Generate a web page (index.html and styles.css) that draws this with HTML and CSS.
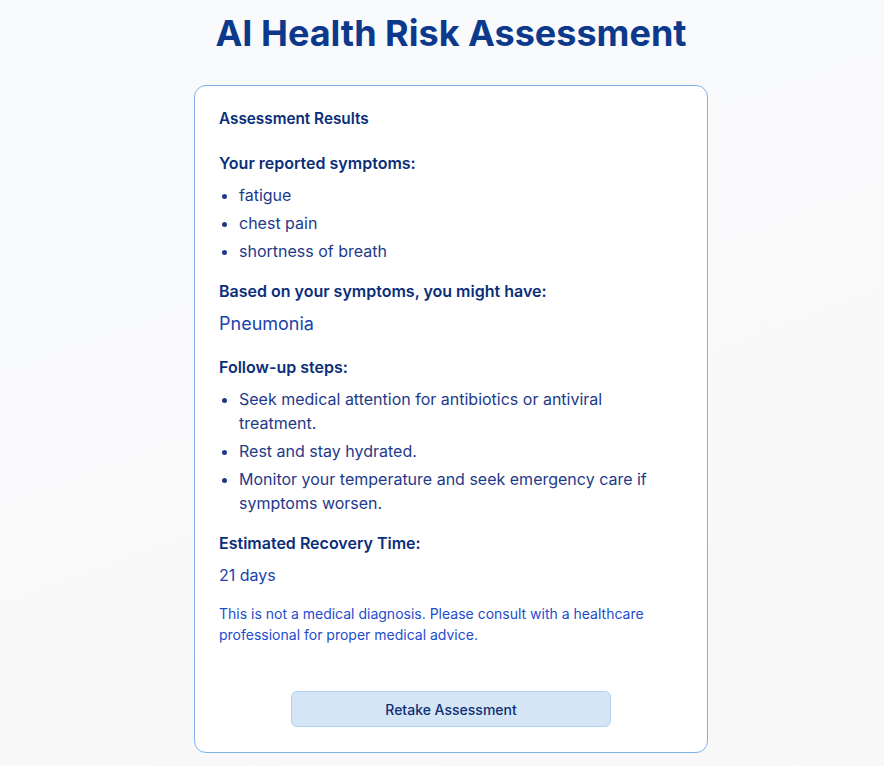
FILE: index.html
```html
<!DOCTYPE html>
<html lang="en">
<head>
<meta charset="utf-8">
<title>AI Health Risk Assessment</title>
<link rel="stylesheet" href="styles.css">
</head>
<body>
<main class="page">
  <h1 class="title">AI Health Risk Assessment</h1>
  <section class="card">
    <h2 class="card-title">Assessment Results</h2>

    <div class="section">
      <h3 class="label">Your reported symptoms:</h3>
      <ul class="list">
        <li>fatigue</li>
        <li>chest pain</li>
        <li>shortness of breath</li>
      </ul>
    </div>

    <div class="section">
      <h3 class="label">Based on your symptoms, you might have:</h3>
      <p class="condition">Pneumonia</p>
    </div>

    <div class="section">
      <h3 class="label">Follow-up steps:</h3>
      <ul class="list">
        <li>Seek medical attention for antibiotics or antiviral treatment.</li>
        <li>Rest and stay hydrated.</li>
        <li>Monitor your temperature and seek emergency care if symptoms worsen.</li>
      </ul>
    </div>

    <div class="section">
      <h3 class="label">Estimated Recovery Time:</h3>
      <p class="recovery">21 days</p>
    </div>

    <p class="disclaimer">This is not a medical diagnosis. Please consult with a healthcare professional for proper medical advice.</p>

    <div class="actions">
      <button class="retake" type="button">Retake Assessment</button>
    </div>
  </section>
</main>
</body>
</html>
```

FILE: styles.css
```css
* { box-sizing: border-box; }

html, body {
  margin: 0;
  padding: 0;
}

body {
  min-height: 766px;
  font-family: Inter, "Noto Sans", sans-serif;
  color: #1e3a8a;
  background: linear-gradient(160deg, #f8fafc 0%, #f9f9fa 60%, #f8f8f8 100%);
}

.page {
  display: flex;
  flex-direction: column;
  align-items: center;
  padding: 13px 0 0 18px;
}

.title {
  margin: 0;
  font-size: 36px;
  line-height: 40px;
  font-weight: 700;
  color: #0c398b;
  letter-spacing: 0;
}

.card {
  margin-top: 32px;
  width: 514px;
  background: #ffffff;
  border: 1px solid #7fb1e9;
  border-radius: 12px;
  padding: 22px 24px 25px 24px;
}

.card-title {
  margin: 0;
  font-size: 15.3px;
  line-height: 22px;
  font-weight: 600;
  color: #0b2e7a;
}

.section {
  margin-top: 22px;
}

.section + .section {
  margin-top: 17px;
}

.label {
  margin: 0 0 9px 0;
  font-size: 16px;
  line-height: 22px;
  font-weight: 600;
  color: #0b2e7a;
}

.list {
  margin: 0;
  padding-left: 20px;
  font-size: 16px;
  line-height: 24px;
  color: #1e3a8a;
}

.list li + li {
  margin-top: 4px;
}

.condition {
  margin: 0;
  padding-bottom: 2px;
  font-size: 18px;
  line-height: 26px;
  color: #1a43ad;
}

.recovery {
  margin: 0;
  font-size: 16px;
  line-height: 24px;
  color: #1a43ad;
}

.disclaimer {
  margin: 16px 0 0 0;
  font-size: 14px;
  line-height: 21px;
  color: #1d4ccc;
}

.actions {
  display: flex;
  justify-content: center;
  margin-top: 46px;
}

.retake {
  width: 320px;
  height: 36px;
  background: #d4e5f6;
  border: 1px solid #b4d2f0;
  border-radius: 6px;
  font-family: Inter, "Noto Sans", sans-serif;
  font-size: 14px;
  font-weight: 500;
  color: #0f2f73;
  cursor: pointer;
}
```
